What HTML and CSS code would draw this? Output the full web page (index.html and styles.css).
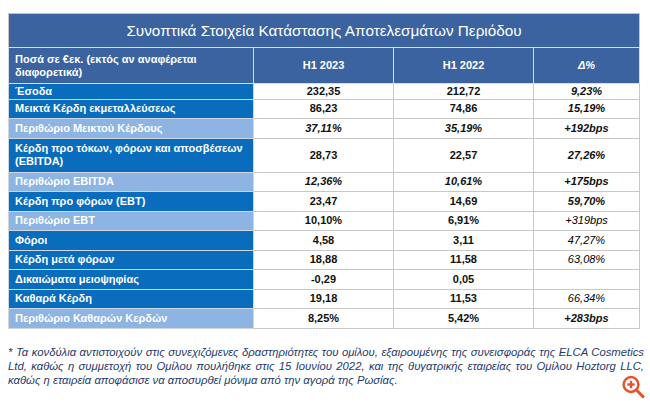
FILE: index.html
```html
<!DOCTYPE html>
<html lang="el">
<head>
<meta charset="utf-8">
<link rel="stylesheet" href="styles.css">
</head>
<body>
<div class="page">
  <table class="fin">
    <colgroup>
      <col class="c-label"><col class="c-val"><col class="c-val"><col class="c-delta">
    </colgroup>
    <thead>
      <tr class="title-row"><th colspan="4">Συνοπτικά Στοιχεία Κατάστασης Αποτελεσμάτων Περιόδου</th></tr>
      <tr class="head-row">
        <th class="lh">Ποσά σε €εκ. (εκτός αν αναφέρεται διαφορετικά)</th>
        <th>H1 2023</th>
        <th>H1 2022</th>
        <th class="it">Δ%</th>
      </tr>
    </thead>
    <tbody>
      <tr class="short"><th class="dark">Έσοδα</th><td>232,35</td><td>212,72</td><td class="it">9,23%</td></tr>
      <tr><th class="dark">Μεικτά Κέρδη εκμεταλλεύσεως</th><td>86,23</td><td>74,86</td><td class="it">15,19%</td></tr>
      <tr><th class="light">Περιθώριο Μεικτού Κέρδους</th><td class="it">37,11%</td><td class="it">35,19%</td><td class="it">+192bps</td></tr>
      <tr class="tall"><th class="dark">Κέρδη προ τόκων, φόρων και αποσβέσεων (EBITDA)</th><td>28,73</td><td>22,57</td><td class="it">27,26%</td></tr>
      <tr><th class="light">Περιθώριο EBITDA</th><td class="it">12,36%</td><td class="it">10,61%</td><td class="it">+175bps</td></tr>
      <tr><th class="dark">Κέρδη προ φόρων (EBT)</th><td>23,47</td><td>14,69</td><td class="it">59,70%</td></tr>
      <tr><th class="light">Περιθώριο EBT</th><td>10,10%</td><td>6,91%</td><td class="it thin">+319bps</td></tr>
      <tr><th class="dark">Φόροι</th><td>4,58</td><td>3,11</td><td class="it thin">47,27%</td></tr>
      <tr><th class="dark">Κέρδη μετά φόρων</th><td>18,88</td><td>11,58</td><td class="it thin">63,08%</td></tr>
      <tr><th class="dark">Δικαιώματα μειοψηφίας</th><td>-0,29</td><td>0,05</td><td></td></tr>
      <tr><th class="dark">Καθαρά Κέρδη</th><td>19,18</td><td>11,53</td><td class="it thin">66,34%</td></tr>
      <tr><th class="light">Περιθώριο Καθαρών Κερδών</th><td>8,25%</td><td>5,42%</td><td class="it">+283bps</td></tr>
    </tbody>
  </table>
  <p class="note">* Τα κονδύλια αντιστοιχούν στις συνεχιζόμενες δραστηριότητες του ομίλου, εξαιρουμένης της συνεισφοράς της ELCA Cosmetics Ltd, καθώς η συμμετοχή του Ομίλου πουλήθηκε στις 15 Ιουνίου 2022, και της θυγατρικής εταιρείας του Ομίλου Hoztorg LLC, καθώς η εταιρεία αποφάσισε να αποσυρθεί μόνιμα από την αγορά της Ρωσίας.</p>
  <svg class="zoom-ic" width="25" height="25" viewBox="0 0 25 25" aria-hidden="true">
    <circle cx="10" cy="9.5" r="7.4" fill="none" stroke="#e8532b" stroke-width="2.5"/>
    <line x1="15.4" y1="15" x2="22" y2="21.6" stroke="#e8532b" stroke-width="3" stroke-linecap="round"/>
    <line x1="10" y1="5.8" x2="10" y2="13.2" stroke="#e8532b" stroke-width="2.4"/>
    <line x1="6.3" y1="9.5" x2="13.7" y2="9.5" stroke="#e8532b" stroke-width="2.4"/>
  </svg>
</div>
</body>
</html>
```

FILE: styles.css
```css
html, body {
  margin: 0;
  padding: 0;
  background: #ffffff;
}
.page {
  position: relative;
  width: 650px;
  height: 404px;
  padding: 13px 0 0 8px;
  box-sizing: border-box;
  font-family: "Liberation Sans", Arial, sans-serif;
  overflow: hidden;
}
.fin {
  border-collapse: collapse;
  width: 631px;
  table-layout: fixed;
  border: 1px solid #c4c4c4;
}
.c-label { width: 245px; }
.c-val { width: 140px; }
.c-delta { width: 106px; }
.fin th, .fin td {
  border: 1px solid #c8c8c8;
  padding: 0 6px;
  font-size: 11px;
  font-weight: bold;
  line-height: 13px;
}
.title-row th {
  background: #3a63a0;
  color: #ffffff;
  font-weight: normal;
  font-size: 15.3px;
  height: 33px;
  text-align: center;
  border-color: #c4c4c4 #c4c4c4 #d6dbe6;
}
.head-row th {
  background: #3a63a0;
  color: #ffffff;
  height: 35px;
  text-align: center;
  border-color: #d6dbe6;
}
.head-row th.lh {
  text-align: left;
}
.fin tbody th {
  text-align: left;
  color: #ffffff;
  height: 18.5px;
  border-color: #cfd6de;
}
.fin tbody tr.short th { height: 14.5px; }
.fin tbody tr.tall th { height: 33px; }
.dark { background: #0a6cbd; }
.light { background: #8db4e2; }
.fin td {
  text-align: center;
  color: #111111;
  background: #ffffff;
}
.it { font-style: italic; }
.thin { font-weight: normal !important; color: #000000 !important; }
.note {
  width: 636px;
  margin: 16px 0 0;
  font-size: 11.3px;
  line-height: 14px;
  font-style: italic;
  color: #1f3a6e;
  text-align: justify;
}
.zoom-ic {
  position: absolute;
  left: 621px;
  top: 375px;
}
```
